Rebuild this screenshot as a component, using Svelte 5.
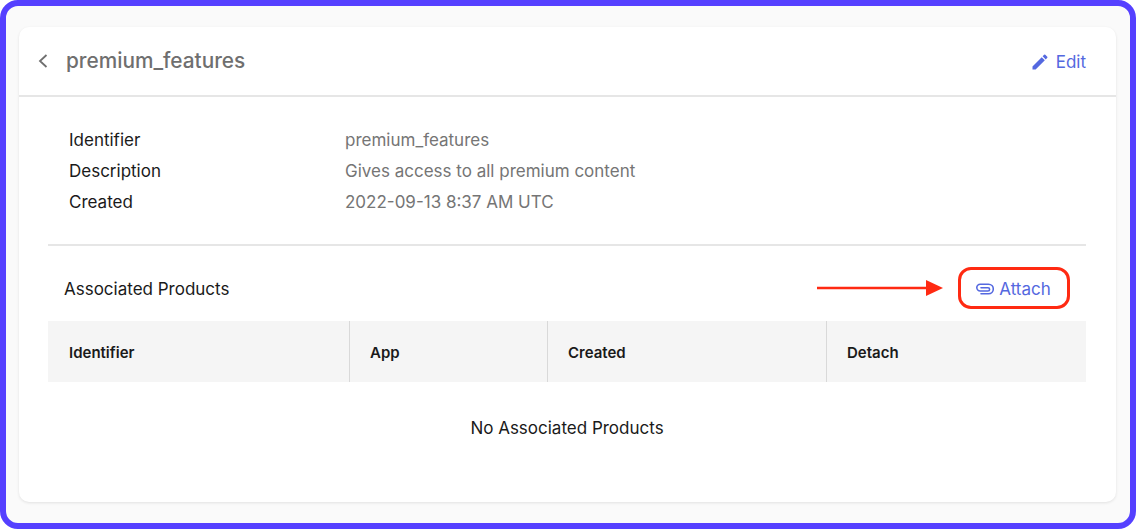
<script lang="ts">
  const details = [
    { label: 'Identifier', value: 'premium_features' },
    { label: 'Description', value: 'Gives access to all premium content' },
    { label: 'Created', value: '2022-09-13 8:37 AM UTC' }
  ]
  const columns = ['Identifier', 'App', 'Created', 'Detach']
</script>

<div class="frame">
  <section class="card">
    <header class="top">
      <div class="title">
        <svg class="back" width="12" height="16" viewBox="0 0 12 16" aria-hidden="true">
          <path d="M9.5 2 L3 8 L9.5 14" fill="none" stroke="#6f6f6f" stroke-width="1.8" />
        </svg>
        <h1>premium_features</h1>
      </div>
      <button class="link edit">
        <svg width="20" height="20" viewBox="0 0 24 24" aria-hidden="true">
          <path fill="#5468e0" d="M3 17.25V21h3.75L17.81 9.94l-3.75-3.75L3 17.25zM20.71 7.04a1 1 0 0 0 0-1.41l-2.34-2.34a1 1 0 0 0-1.41 0l-1.83 1.83 3.75 3.75 1.83-1.83z" />
        </svg>
        Edit
      </button>
    </header>

    <div class="body">
      <dl class="details">
        {#each details as row (row.label)}
          <dt>{row.label}</dt>
          <dd>{row.value}</dd>
        {/each}
      </dl>

      <div class="assoc">
        <h2>Associated Products</h2>
        <div class="callout">
          <svg class="arrow" width="127" height="18" viewBox="0 0 127 18" aria-hidden="true">
            <path d="M0 9 H111" stroke="#ff2a12" stroke-width="2.4" />
            <path d="M109 1 L126 9 L109 17 Z" fill="#ff2a12" />
          </svg>
          <button class="link attach">
            <svg width="18" height="12" viewBox="0 0 18 12" aria-hidden="true">
              <path fill="none" stroke="#5468e0" stroke-width="1.6" stroke-linecap="round" d="M5 10.8 H12.5 a4.6 4.6 0 0 0 0 -9.6 H4.2 a3.3 3.3 0 0 0 0 6.8 H12 a1.5 1.5 0 0 0 0 -3.2 H5" />
            </svg>
            Attach
          </button>
        </div>
      </div>

      <div class="table-head">
        {#each columns as col (col)}
          <div class="cell">{col}</div>
        {/each}
      </div>
      <p class="empty">No Associated Products</p>
    </div>
  </section>
</div>

<style>
  :global(body) {
    margin: 0;
  }

  .frame {
    box-sizing: border-box;
    width: 1136px;
    height: 529px;
    padding: 21px 14px 21px 13px;
    background: #fafafa;
    border: 6px solid #5540ff;
    border-radius: 18px;
    font-family: Inter, "Liberation Sans", sans-serif;
    color: #1a1a1a;
  }

  .card {
    height: 475px;
    box-sizing: border-box;
    background: #fff;
    border-radius: 10px;
    box-shadow: 0 1px 3px rgba(0, 0, 0, .1);
  }

  .top {
    display: flex;
    align-items: center;
    justify-content: space-between;
    box-sizing: border-box;
    height: 70px;
    padding: 0 30px 0 18px;
    border-bottom: 2px solid #e6e6e6;
  }

  .title {
    display: flex;
    align-items: center;
    gap: 17px;
  }

  h1 {
    margin: 0;
    font-size: 20.8px;
    font-weight: 500;
    line-height: 28px;
    color: #6f6f6f;
  }

  .link {
    display: flex;
    align-items: center;
    gap: 5px;
    padding: 0;
    border: 0;
    background: none;
    font: inherit;
    font-size: 17px;
    color: #5468e0;
  }

  .edit {
    gap: 6px;
    padding-top: 2px;
  }

  .body {
    padding: 0 30px 0 29px;
  }

  .details {
    display: grid;
    grid-template-columns: 276px auto;
    grid-auto-rows: 31px;
    align-items: center;
    margin: 0;
    padding: 27px 0 27px 21px;
    border-bottom: 2px solid #e6e6e6;
    font-size: 17px;
  }

  dd {
    margin: 0;
    color: #757575;
  }

  .assoc {
    display: flex;
    align-items: center;
    justify-content: space-between;
    box-sizing: border-box;
    height: 75px;
    padding: 9px 16px 0;
  }

  h2 {
    margin: 0;
    padding-top: 2px;
    font-size: 17px;
    font-weight: 400;
  }

  .callout {
    display: flex;
    align-items: center;
    gap: 14px;
  }

  .attach {
    box-sizing: border-box;
    justify-content: center;
    width: 112px;
    height: 42px;
    padding: 2px 1px 0 0;
    border: 3px solid #ff2a12;
    border-radius: 13px;
  }

  .table-head {
    display: grid;
    grid-template-columns: 302px 198px 279px 1fr;
    height: 61px;
    background: #f5f5f5;
  }

  .cell {
    display: flex;
    align-items: center;
    padding: 2px 0 0 20px;
    font-size: 15px;
    font-weight: 600;
    border-right: 1px solid #d9d9d9;
  }

  .cell:first-child {
    padding-left: 21px;
  }

  .cell:last-child {
    border-right: 0;
  }

  .empty {
    margin: 34px 0 0;
    text-align: center;
    font-size: 17px;
    line-height: 24px;
  }
</style>
